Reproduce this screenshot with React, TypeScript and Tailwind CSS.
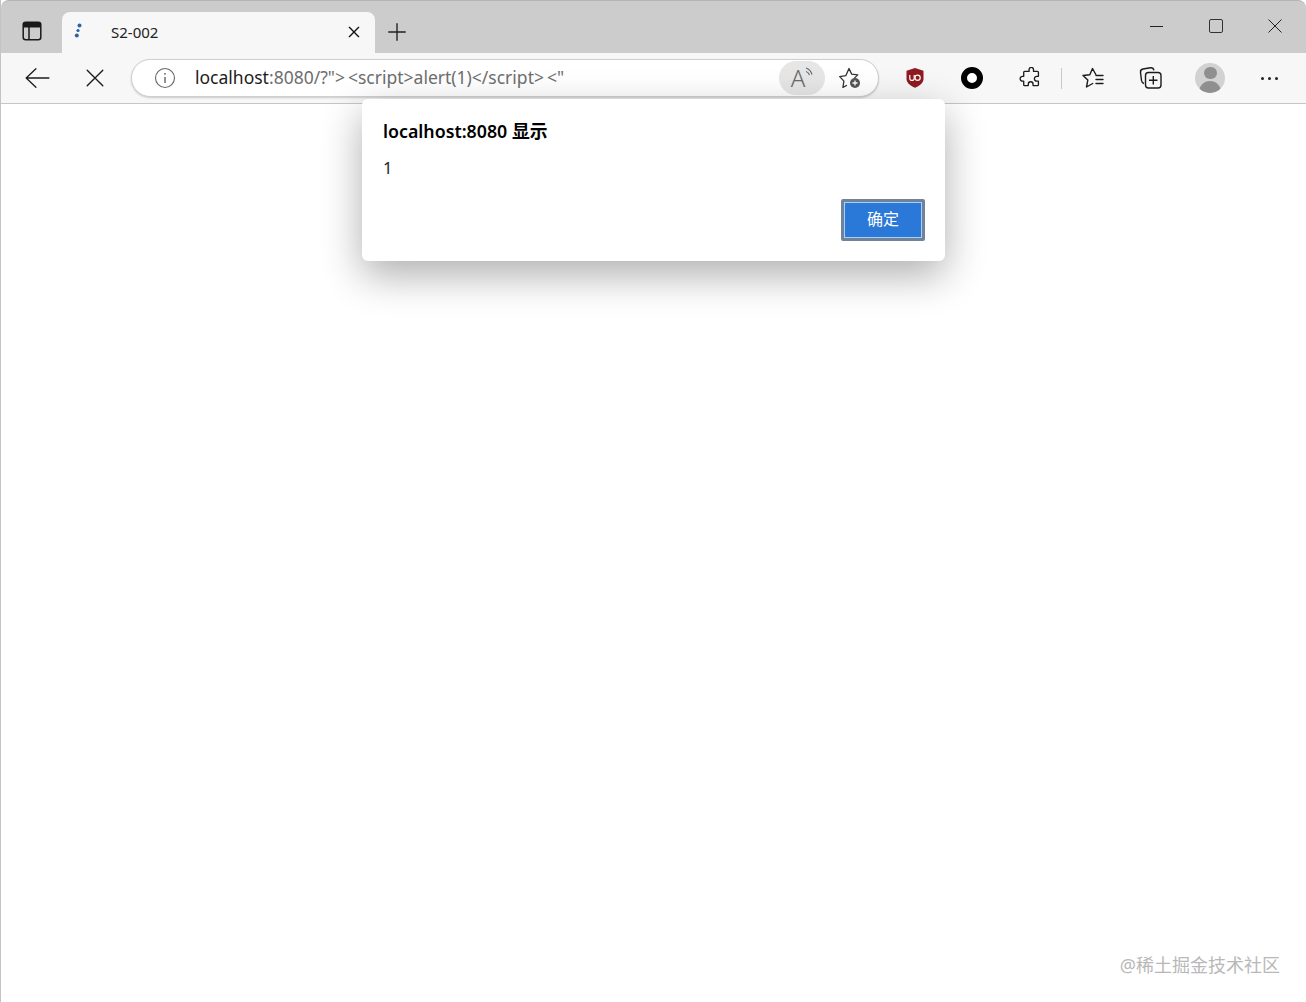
const font = { fontFamily: '"Noto Sans", "Noto Sans CJK SC", sans-serif' };

function Ico({ w = 24, children, className = "" }: { w?: number; children: React.ReactNode; className?: string }) {
  return (
    <svg width={w} height={w} viewBox="0 0 24 24" fill="none" stroke="currentColor" strokeWidth="1.4" strokeLinecap="round" strokeLinejoin="round" className={className}>
      {children}
    </svg>
  );
}

export default function App() {
  return (
    <div className="relative w-[1306px] h-[1002px] overflow-hidden bg-white border-l border-[#c4c4c4]" style={font}>
      {/* title bar */}
      <div className="h-[53px] bg-[#cccccc] flex items-end border-t border-[#b4b4b4] rounded-t-lg">
        <div className="w-[61px] h-[52px] flex items-center justify-center pl-[1px] pt-[6px] pb-[1px]">
          <svg width="20" height="20" viewBox="0 0 20 20" className="text-[#1a1a1a] mt-[2px]">
            <rect x="1.2" y="1.2" width="17.6" height="17.6" rx="2.5" fill="none" stroke="currentColor" strokeWidth="1.5" />
            <path d="M1.2 3.5a2.3 2.3 0 0 1 2.3-2.3h13a2.3 2.3 0 0 1 2.3 2.3v3H1.2z" fill="currentColor" />
            <path d="M7 6v12.5" stroke="currentColor" strokeWidth="1.5" />
          </svg>
        </div>
        <div className="w-[313px] h-[41px] bg-[#f7f7f7] rounded-t-lg flex items-center pb-[1px]">
          <svg width="8" height="16" viewBox="0 0 8 16" className="ml-[12px] mb-[3px]">
            <circle cx="5.5" cy="2.5" r="2" fill="#2c63a8" />
            <circle cx="4" cy="7.5" r="1.6" fill="#2c63a8" />
            <circle cx="2.8" cy="12.5" r="2" fill="#2c63a8" />
          </svg>
          <span className="ml-[29px] text-[15px] text-[#222] w-[200px] whitespace-nowrap">S2-002</span>
          <Ico w={16} className="ml-[35px] text-[#111]"><path d="M5 5l14 14M19 5L5 19" strokeWidth="2" /></Ico>
        </div>
        <div className="w-[44px] h-[41px] flex items-center justify-center pb-[1px] text-[#222]">
          <Ico w={22}><path d="M12 3v18M3 12h18" strokeWidth="1.5" /></Ico>
        </div>
        <div className="flex-1" />
        <div className="flex items-center self-start h-[52px] pb-[2px] text-[#1a1a1a]">
          <div className="w-[59px] flex justify-center"><div className="w-[13px] h-[1px] bg-[#222]" /></div>
          <div className="w-[59px] flex justify-center pl-[1px]"><div className="w-[14px] h-[14px] border border-[#333] rounded-[2px]" /></div>
          <div className="w-[59px] flex justify-center mr-[2px]">
            <svg width="14" height="14" viewBox="0 0 14 14" stroke="#222" strokeWidth="1"><path d="M.5.5l13 13M13.5.5l-13 13" /></svg>
          </div>
        </div>
      </div>

      {/* toolbar */}
      <div className="h-[51px] bg-[#f7f7f7] border-b border-[#c6c6c6] flex items-center text-[#1c1c1c]">
        <div className="w-[72px] flex justify-center pr-[1px]">
          <Ico w={26}><path d="M23 12H2M11 3.5L2 12l9 8.5" strokeWidth="1.2" /></Ico>
        </div>
        <div className="w-[44px] flex justify-center">
          <Ico w={22}><path d="M3.5 3.5l17 17M20.5 3.5l-17 17" strokeWidth="1.5" /></Ico>
        </div>
        <div className="ml-[14px] w-[748px] h-[38px] bg-white rounded-[19px] border border-[#cfcfcf] shadow-[0_1px_2px_rgba(0,0,0,0.18)] flex items-center">
          <svg width="22" height="22" viewBox="0 0 22 22" className="ml-[22px]">
            <circle cx="11" cy="11" r="9.5" fill="none" stroke="#666" strokeWidth="1.1" />
            <path d="M11 10v6" stroke="#555" strokeWidth="1.3" />
            <circle cx="11" cy="6.8" r="0.9" fill="#555" />
          </svg>
          <div className="ml-[19px] w-[400px] text-[17.5px] leading-none whitespace-nowrap text-[#6e6e6e]">
            <span className="text-[#1c1c1c]">localhost</span>:8080/?"&gt;<span className="ml-[3px]">&lt;script&gt;alert(1)&lt;/script&gt;</span><span className="ml-[3px]">&lt;"</span>
          </div>
          <div className="flex-1" />
          <div className="w-[46px] h-[34px] rounded-[17px] bg-[#e6e6e6] flex items-center justify-center pl-[2px]">
            <span className="text-[24px] leading-none text-[#6a6a6a] font-light">A</span>
            <svg width="10" height="12" viewBox="0 0 10 12" className="-mt-[10px]" fill="none" stroke="#6a6a6a" strokeWidth="1.2">
              <path d="M1 1c3 1 5 3 6 6.500M1 4.500c2 .6 3 2 3.500 3.500" />
            </svg>
          </div>
          <div className="w-[53px] flex justify-center pr-[3px]">
            <svg width="24" height="24" viewBox="0 0 24 24" fill="none">
              <path d="M11 2.500l2.700 5.600 6.100.8-3.200 3M8.500 19.500l-3.600 1.900 1-6.300L1.700 10.600l6.100-.9L11 2.500" stroke="#333" strokeWidth="1.300" strokeLinejoin="round" strokeLinecap="round" />
              <circle cx="17" cy="17" r="5" fill="#555" />
              <path d="M17 14.500v5M14.500 17h5" stroke="#fff" strokeWidth="1.300" />
            </svg>
          </div>
        </div>
        <div className="w-[25px]" />
        <div className="w-[22px] flex justify-center">
          <svg width="20" height="22" viewBox="0 0 20 22">
            <path d="M10 1l8.500 2.800v8c0 4-3.500 7-8.500 9-5-2-8.500-5-8.500-9v-8z" fill="#8f1a1f" />
            <path d="M4.800 8v3.200a2.200 2.200 0 0 0 4.400 0V8" fill="none" stroke="#fff" strokeWidth="1.200" />
            <circle cx="12.600" cy="10.800" r="2.600" fill="none" stroke="#fff" strokeWidth="1.200" />
          </svg>
        </div>
        <div className="ml-[35px] w-[22px] h-[22px] rounded-full border-[6px] border-black bg-white" />
        <div className="ml-[36px] w-[24px]">
          <svg width="23" height="23" viewBox="0 0 24 24" fill="none" stroke="#1c1c1c" strokeWidth="1.500" strokeLinejoin="round">
            <path d="M10 3.500a2.500 2.500 0 0 1 5 0V5.500h4.500a1 1 0 0 1 1 1V11h-1.800a2.700 2.700 0 0 0 0 5.400h1.800v4a1 1 0 0 1-1 1H14.500v-1.600a2.700 2.700 0 0 0-5.400 0v1.600H5a1 1 0 0 1-1-1v-4H2.700a2.700 2.700 0 0 1 0-5.400H4V6.500a1 1 0 0 1 1-1h5z" transform="translate(1.200 -.5) scale(.93)" />
          </svg>
        </div>
        <div className="ml-[18px] w-px h-[21px] bg-[#c8c8c8]" />
        <div className="ml-[19px] w-[24px]">
          <svg width="24" height="24" viewBox="0 0 24 24" fill="none" stroke="#1c1c1c" strokeWidth="1.400" strokeLinejoin="round" strokeLinecap="round">
            <path d="M14.800 8.500L11.500 2.500 8.800 8.800 2 9.500l4.800 4.600L5.500 21l6.200-3.500" />
            <path d="M15 9.500h7M15 13.500h7M15 17.500h7" />
          </svg>
        </div>
        <div className="ml-[34px] w-[24px]">
          <svg width="24" height="24" viewBox="0 0 24 24" fill="none" stroke="#1c1c1c" strokeWidth="1.400" strokeLinejoin="round">
            <path d="M5 17.500c-1.500-.5-2.300-1.500-2.500-3L1.500 6.500C1.300 4.500 2.300 3.300 4 3l7.500-1.200c1.700-.2 3 .7 3.400 2.500" />
            <rect x="6.500" y="6.500" width="15.500" height="15.500" rx="3" />
            <path d="M14.300 10v8.500M10 14.300h8.500" />
          </svg>
        </div>
        <div className="ml-[32px] w-[30px] h-[30px] rounded-full bg-[#d2d2d2] overflow-hidden flex flex-col items-center">
          <div className="mt-[4px] w-[13px] h-[13px] rounded-full bg-[#8f8f8f]" />
          <div className="mt-[2px] w-[22px] h-[14px] rounded-t-full bg-[#8f8f8f]" />
        </div>
        <div className="ml-[36px] flex gap-[4px]">
          <div className="w-[3px] h-[3px] rounded-full bg-[#222]" />
          <div className="w-[3px] h-[3px] rounded-full bg-[#222]" />
          <div className="w-[3px] h-[3px] rounded-full bg-[#222]" />
        </div>
      </div>

      {/* alert dialog */}
      <div className="absolute left-[361px] top-[99px] w-[583px] h-[162px] bg-white rounded-[6px] shadow-[0_14px_40px_rgba(0,0,0,0.32)] flex flex-col pl-[21px] pr-[22px]">
        <div className="mt-[20px] text-[17.800px] leading-[24px] font-semibold text-black whitespace-nowrap">localhost:8080 显示</div>
        <div className="mt-[14px] text-[16.500px] leading-[22px] text-[#222]">1</div>
        <div className="mt-[20px] flex justify-end -mr-[2px]">
          <div className="w-[84px] h-[42px] bg-[#2a78d8] border-[3px] border-[#71839b] rounded-[2px] outline outline-1 -outline-offset-4 outline-[#a8d0f5] flex items-center justify-center pb-[2px] text-[16px] text-white">确定</div>
        </div>
      </div>

      {/* watermark */}
      <div className="absolute right-[26px] top-[952px] text-[18px] leading-[26px] text-[#b8b8b8] whitespace-nowrap">@稀土掘金技术社区</div>
    </div>
  );
}
